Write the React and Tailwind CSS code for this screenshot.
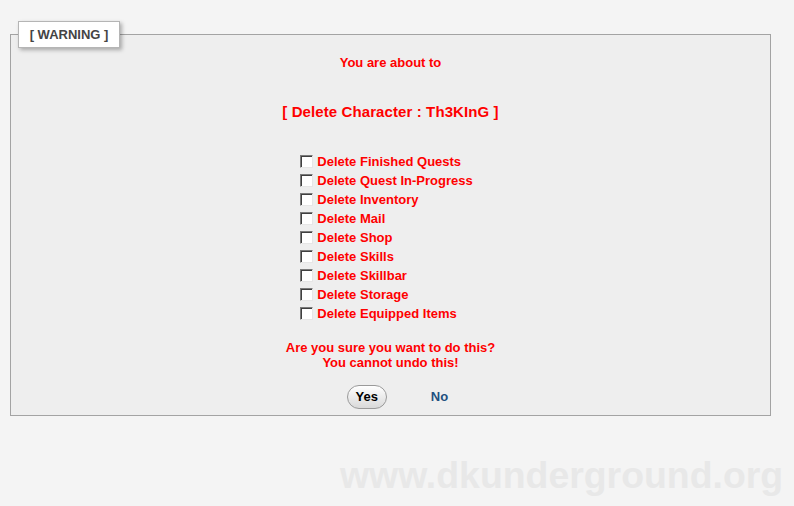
import React from "react";

const items = [
  "Delete Finished Quests",
  "Delete Quest In-Progress",
  "Delete Inventory",
  "Delete Mail",
  "Delete Shop",
  "Delete Skills",
  "Delete Skillbar",
  "Delete Storage",
  "Delete Equipped Items",
];

export default function App() {
  return (
    <div
      className="relative w-[794px] h-[506px] bg-[#f4f4f4] overflow-hidden"
      style={{ fontFamily: '"Liberation Sans", Arial, sans-serif' }}
    >
      <div className="pt-[34px] pl-[10px]">
        <div className="relative w-[761px] border border-[#a3a3a3] bg-[#eeeeee] pt-[20px] pb-[6px] flex flex-col items-center">
          <div className="absolute left-[7px] top-[-14px] w-[102px] h-[27px] bg-white border border-[#b5b5b5] shadow-[2px_2px_4px_rgba(0,0,0,0.3)] flex items-center justify-center text-[13px] font-bold text-[#444]">
            [ WARNING ]
          </div>
          <div className="text-[13px] leading-[15px] font-bold text-[#ff0000]">You are about to</div>
          <div className="mt-[33px] text-[15px] leading-[17px] font-bold text-[#ff0000] tracking-[0.1px]">
            [ Delete Character : Th3KInG ]
          </div>
          <div className="mt-[32px] flex flex-col ml-[-8px]">
            {items.map((t) => (
              <div key={t} className="flex items-center h-[19px]">
                <span className="w-[13px] h-[13px] bg-white border border-t-[#7a7a7a] border-l-[#7a7a7a] border-b-[#e6e6e6] border-r-[#e6e6e6] shadow-[inset_1px_1px_0_#404040]" />
                <span className="ml-[4px] text-[13px] font-bold text-[#ff0000]">{t}</span>
              </div>
            ))}
          </div>
          <div className="mt-[17px] text-[13px] leading-[15px] font-bold text-[#ff0000] text-center">
            Are you sure you want to do this?
            <br />
            You cannot undo this!
          </div>
          <div className="mt-[15px] flex items-center gap-[44px] ml-[14px]">
            <button className="w-[40px] h-[24px] rounded-full border border-[#9a9a9a] bg-gradient-to-b from-white to-[#d9d9d9] text-[13px] font-bold text-black">
              Yes
            </button>
            <span className="text-[13px] font-bold text-[#1e5080]">No</span>
          </div>
        </div>
      </div>
      <div className="absolute left-[340px] top-[453px] text-[37.4px] font-bold text-[#e8e8e8] leading-[44px]">
        www.dkunderground.org
      </div>
    </div>
  );
}
